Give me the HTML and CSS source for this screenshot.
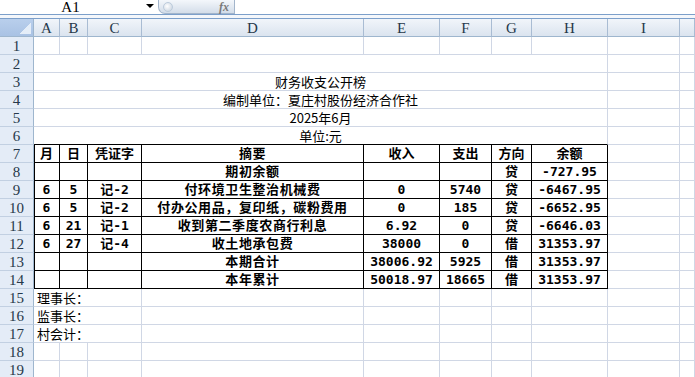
FILE: index.html
```html
<!DOCTYPE html>
<html lang="zh-CN">
<head>
    <meta charset="UTF-8">
    <title>财务收支公开榜</title>
    <link rel="stylesheet" href="styles.css">
</head>
<body>
    <div class="formula-bar">
        <div class="name-box">A1</div>
        <div class="name-arrow"></div>
        <div class="fx-btn"><span class="fx-dot"></span><span class="fx">fx</span></div>
        <div class="formula-input"></div>
    </div>
    <div class="bar-gap"></div>

    <div class="sheet">
        <!-- column headers -->
        <div class="corner"></div>
        <div class="col-head">A</div>
        <div class="col-head">B</div>
        <div class="col-head">C</div>
        <div class="col-head">D</div>
        <div class="col-head">E</div>
        <div class="col-head">F</div>
        <div class="col-head">G</div>
        <div class="col-head">H</div>
        <div class="col-head">I</div>
        <div class="col-head"></div>

        <!-- 1 -->
        <div class="row-head">1</div>
        <div class="cell"></div><div class="cell"></div><div class="cell"></div><div class="cell"></div><div class="cell"></div>
        <div class="cell"></div><div class="cell"></div><div class="cell"></div><div class="cell"></div><div class="cell"></div>

        <!-- 2 -->
        <div class="row-head">2</div>
        <div class="cell span-8"></div><div class="cell"></div><div class="cell"></div>

        <!-- 3 - 6 -->
        <div class="row-head">3</div>
        <div class="cell span-8 title">财务收支公开榜</div><div class="cell"></div><div class="cell"></div>
        <div class="row-head">4</div>
        <div class="cell span-8 title">编制单位：夏庄村股份经济合作社</div><div class="cell"></div><div class="cell"></div>
        <div class="row-head">5</div>
        <div class="cell span-8 title">2025年6月</div><div class="cell"></div><div class="cell"></div>
        <div class="row-head">6</div>
        <div class="cell span-8 title table-top">单位:元</div><div class="cell"></div><div class="cell"></div>

        <!-- 7 -->
        <div class="row-head">7</div>
        <div class="cell t first">月</div>
        <div class="cell t">日</div>
        <div class="cell t">凭证字</div>
        <div class="cell t wide">摘要</div>
        <div class="cell t">收入</div>
        <div class="cell t">支出</div>
        <div class="cell t">方向</div>
        <div class="cell t">余额</div>
        <div class="cell"></div><div class="cell"></div>

        <!-- 8 -->
        <div class="row-head">8</div>
        <div class="cell t first"></div>
        <div class="cell t"></div>
        <div class="cell t"></div>
        <div class="cell t wide">期初余额</div>
        <div class="cell t"></div>
        <div class="cell t"></div>
        <div class="cell t">贷</div>
        <div class="cell t">-727.95</div>
        <div class="cell"></div><div class="cell"></div>

        <!-- 9 -->
        <div class="row-head">9</div>
        <div class="cell t first">6</div>
        <div class="cell t">5</div>
        <div class="cell t">记-2</div>
        <div class="cell t wide">付环境卫生整治机械费</div>
        <div class="cell t">0</div>
        <div class="cell t">5740</div>
        <div class="cell t">贷</div>
        <div class="cell t">-6467.95</div>
        <div class="cell"></div><div class="cell"></div>

        <!-- 10 -->
        <div class="row-head">10</div>
        <div class="cell t first">6</div>
        <div class="cell t">5</div>
        <div class="cell t">记-2</div>
        <div class="cell t wide">付办公用品，复印纸，碳粉费用</div>
        <div class="cell t">0</div>
        <div class="cell t">185</div>
        <div class="cell t">贷</div>
        <div class="cell t">-6652.95</div>
        <div class="cell"></div><div class="cell"></div>

        <!-- 11 -->
        <div class="row-head">11</div>
        <div class="cell t first">6</div>
        <div class="cell t">21</div>
        <div class="cell t">记-1</div>
        <div class="cell t wide">收到第二季度农商行利息</div>
        <div class="cell t">6.92</div>
        <div class="cell t">0</div>
        <div class="cell t">贷</div>
        <div class="cell t">-6646.03</div>
        <div class="cell"></div><div class="cell"></div>

        <!-- 12 -->
        <div class="row-head">12</div>
        <div class="cell t first">6</div>
        <div class="cell t">27</div>
        <div class="cell t">记-4</div>
        <div class="cell t wide">收土地承包费</div>
        <div class="cell t">38000</div>
        <div class="cell t">0</div>
        <div class="cell t">借</div>
        <div class="cell t">31353.97</div>
        <div class="cell"></div><div class="cell"></div>

        <!-- 13 -->
        <div class="row-head">13</div>
        <div class="cell t first"></div>
        <div class="cell t"></div>
        <div class="cell t"></div>
        <div class="cell t wide">本期合计</div>
        <div class="cell t">38006.92</div>
        <div class="cell t">5925</div>
        <div class="cell t">借</div>
        <div class="cell t">31353.97</div>
        <div class="cell"></div><div class="cell"></div>

        <!-- 14 -->
        <div class="row-head">14</div>
        <div class="cell t first"></div>
        <div class="cell t"></div>
        <div class="cell t"></div>
        <div class="cell t wide">本年累计</div>
        <div class="cell t">50018.97</div>
        <div class="cell t">18665</div>
        <div class="cell t">借</div>
        <div class="cell t">31353.97</div>
        <div class="cell"></div><div class="cell"></div>

        <!-- 15 - 17 -->
        <div class="row-head">15</div>
        <div class="cell span-3 sign">理事长：</div>
        <div class="cell"></div><div class="cell"></div><div class="cell"></div><div class="cell"></div>
        <div class="cell"></div><div class="cell"></div><div class="cell"></div>
        <div class="row-head">16</div>
        <div class="cell span-3 sign">监事长：</div>
        <div class="cell"></div><div class="cell"></div><div class="cell"></div><div class="cell"></div>
        <div class="cell"></div><div class="cell"></div><div class="cell"></div>
        <div class="row-head">17</div>
        <div class="cell span-3 sign">村会计：</div>
        <div class="cell"></div><div class="cell"></div><div class="cell"></div><div class="cell"></div>
        <div class="cell"></div><div class="cell"></div><div class="cell"></div>

        <!-- 18 - 19 -->
        <div class="row-head">18</div>
        <div class="cell"></div><div class="cell"></div><div class="cell"></div><div class="cell"></div><div class="cell"></div>
        <div class="cell"></div><div class="cell"></div><div class="cell"></div><div class="cell"></div><div class="cell"></div>
        <div class="row-head">19</div>
        <div class="cell"></div><div class="cell"></div><div class="cell"></div><div class="cell"></div><div class="cell"></div>
        <div class="cell"></div><div class="cell"></div><div class="cell"></div><div class="cell"></div><div class="cell"></div>
    </div>
</body>
</html>
```

FILE: styles.css
```css
body {
    margin: 0;
    padding: 0;
    background-color: #fff;
    font-family: "Noto Sans CJK SC", sans-serif;
    overflow: hidden;
}

/* formula bar */
.formula-bar {
    display: flex;
    height: 14px;
    border-bottom: 1px solid #7c9fca;
    background: #fff;
}

.name-box {
    width: 141px;
    text-align: center;
    font-family: "Liberation Serif", serif;
    font-size: 15px;
    line-height: 14px;
    color: #000;
}

.name-arrow {
    width: 17px;
    display: flex;
    align-items: center;
    justify-content: center;
}

.name-arrow::before {
    content: "";
    border-left: 4px solid transparent;
    border-right: 4px solid transparent;
    border-top: 4px solid #000;
    margin-top: -2px;
}

.fx-btn {
    width: 77px;
    box-sizing: border-box;
    display: flex;
    align-items: center;
    justify-content: space-between;
    padding: 0 5px 0 4px;
    border: 1px solid #a3b5cb;
    border-top: none;
    border-radius: 0 0 0 7px;
    background: linear-gradient(#f4f7fb, #d3dde9);
}

.fx-dot {
    width: 8px;
    height: 8px;
    border-radius: 50%;
    background: radial-gradient(circle at 40% 40%, #ffffff, #c2cedc);
    border: 1px solid #bccbdc;
}

.fx {
    font-family: "Liberation Serif", serif;
    font-style: italic;
    font-weight: bold;
    font-size: 12px;
    color: #7a7a7a;
    line-height: 12px;
}

.formula-input {
    flex: 1;
}

.bar-gap {
    height: 3px;
    background: #f4f7fb;
    border-bottom: 1px solid #7c9fca;
}

/* sheet grid */
.sheet {
    display: grid;
    grid-template-columns: 34px 26px 28px 54px 222px 76px 52px 40px 76px 72px 1fr;
    grid-auto-rows: 18px;
}

.corner {
    box-sizing: border-box;
    display: flex;
    align-items: flex-end;
    justify-content: flex-end;
    padding: 0 2px 2px 0;
    background: linear-gradient(#b9cfec, #a9c2e4);
    border-right: 1px solid #9eb6ce;
    border-bottom: 1px solid #9eb6ce;
}

.corner::after {
    content: "";
    width: 11px;
    height: 11px;
    background: linear-gradient(to bottom right, transparent 50%, #e4edf8 50%);
}

.col-head {
    box-sizing: border-box;
    background: linear-gradient(#f1f5fa, #dbe4ef);
    border-right: 1px solid #a9bcd3;
    border-bottom: 1px solid #9eb6ce;
    text-align: center;
    font-family: "Liberation Serif", serif;
    font-size: 15px;
    line-height: 18px;
    color: #26384a;
}

.row-head {
    box-sizing: border-box;
    background: #e4ecf7;
    border-right: 1px solid #9eb6ce;
    border-bottom: 1px solid #c2d0e2;
    text-align: center;
    font-family: "Liberation Serif", serif;
    font-size: 15px;
    line-height: 18px;
    color: #26384a;
}

.cell {
    box-sizing: border-box;
    border-right: 1px solid #d0d7e5;
    border-bottom: 1px solid #d0d7e5;
    font-size: 13px;
    line-height: 17px;
    white-space: nowrap;
    overflow: hidden;
    color: #000;
}

.span-8 {
    grid-column: span 8;
}

.span-3 {
    grid-column: span 3;
}

.title {
    text-align: center;
}

.table-top {
    border-bottom-color: #000;
}

/* bordered table area */
.t {
    border-right-color: #000;
    border-bottom-color: #000;
    text-align: center;
    font-family: "DejaVu Sans Mono", "Noto Sans CJK SC", monospace;
    font-weight: bold;
}

.t.first {
    box-shadow: inset 1px 0 #000;
}

.t.wide {
    letter-spacing: 0.6px;
}

.sign {
    padding-left: 3px;
}
```
